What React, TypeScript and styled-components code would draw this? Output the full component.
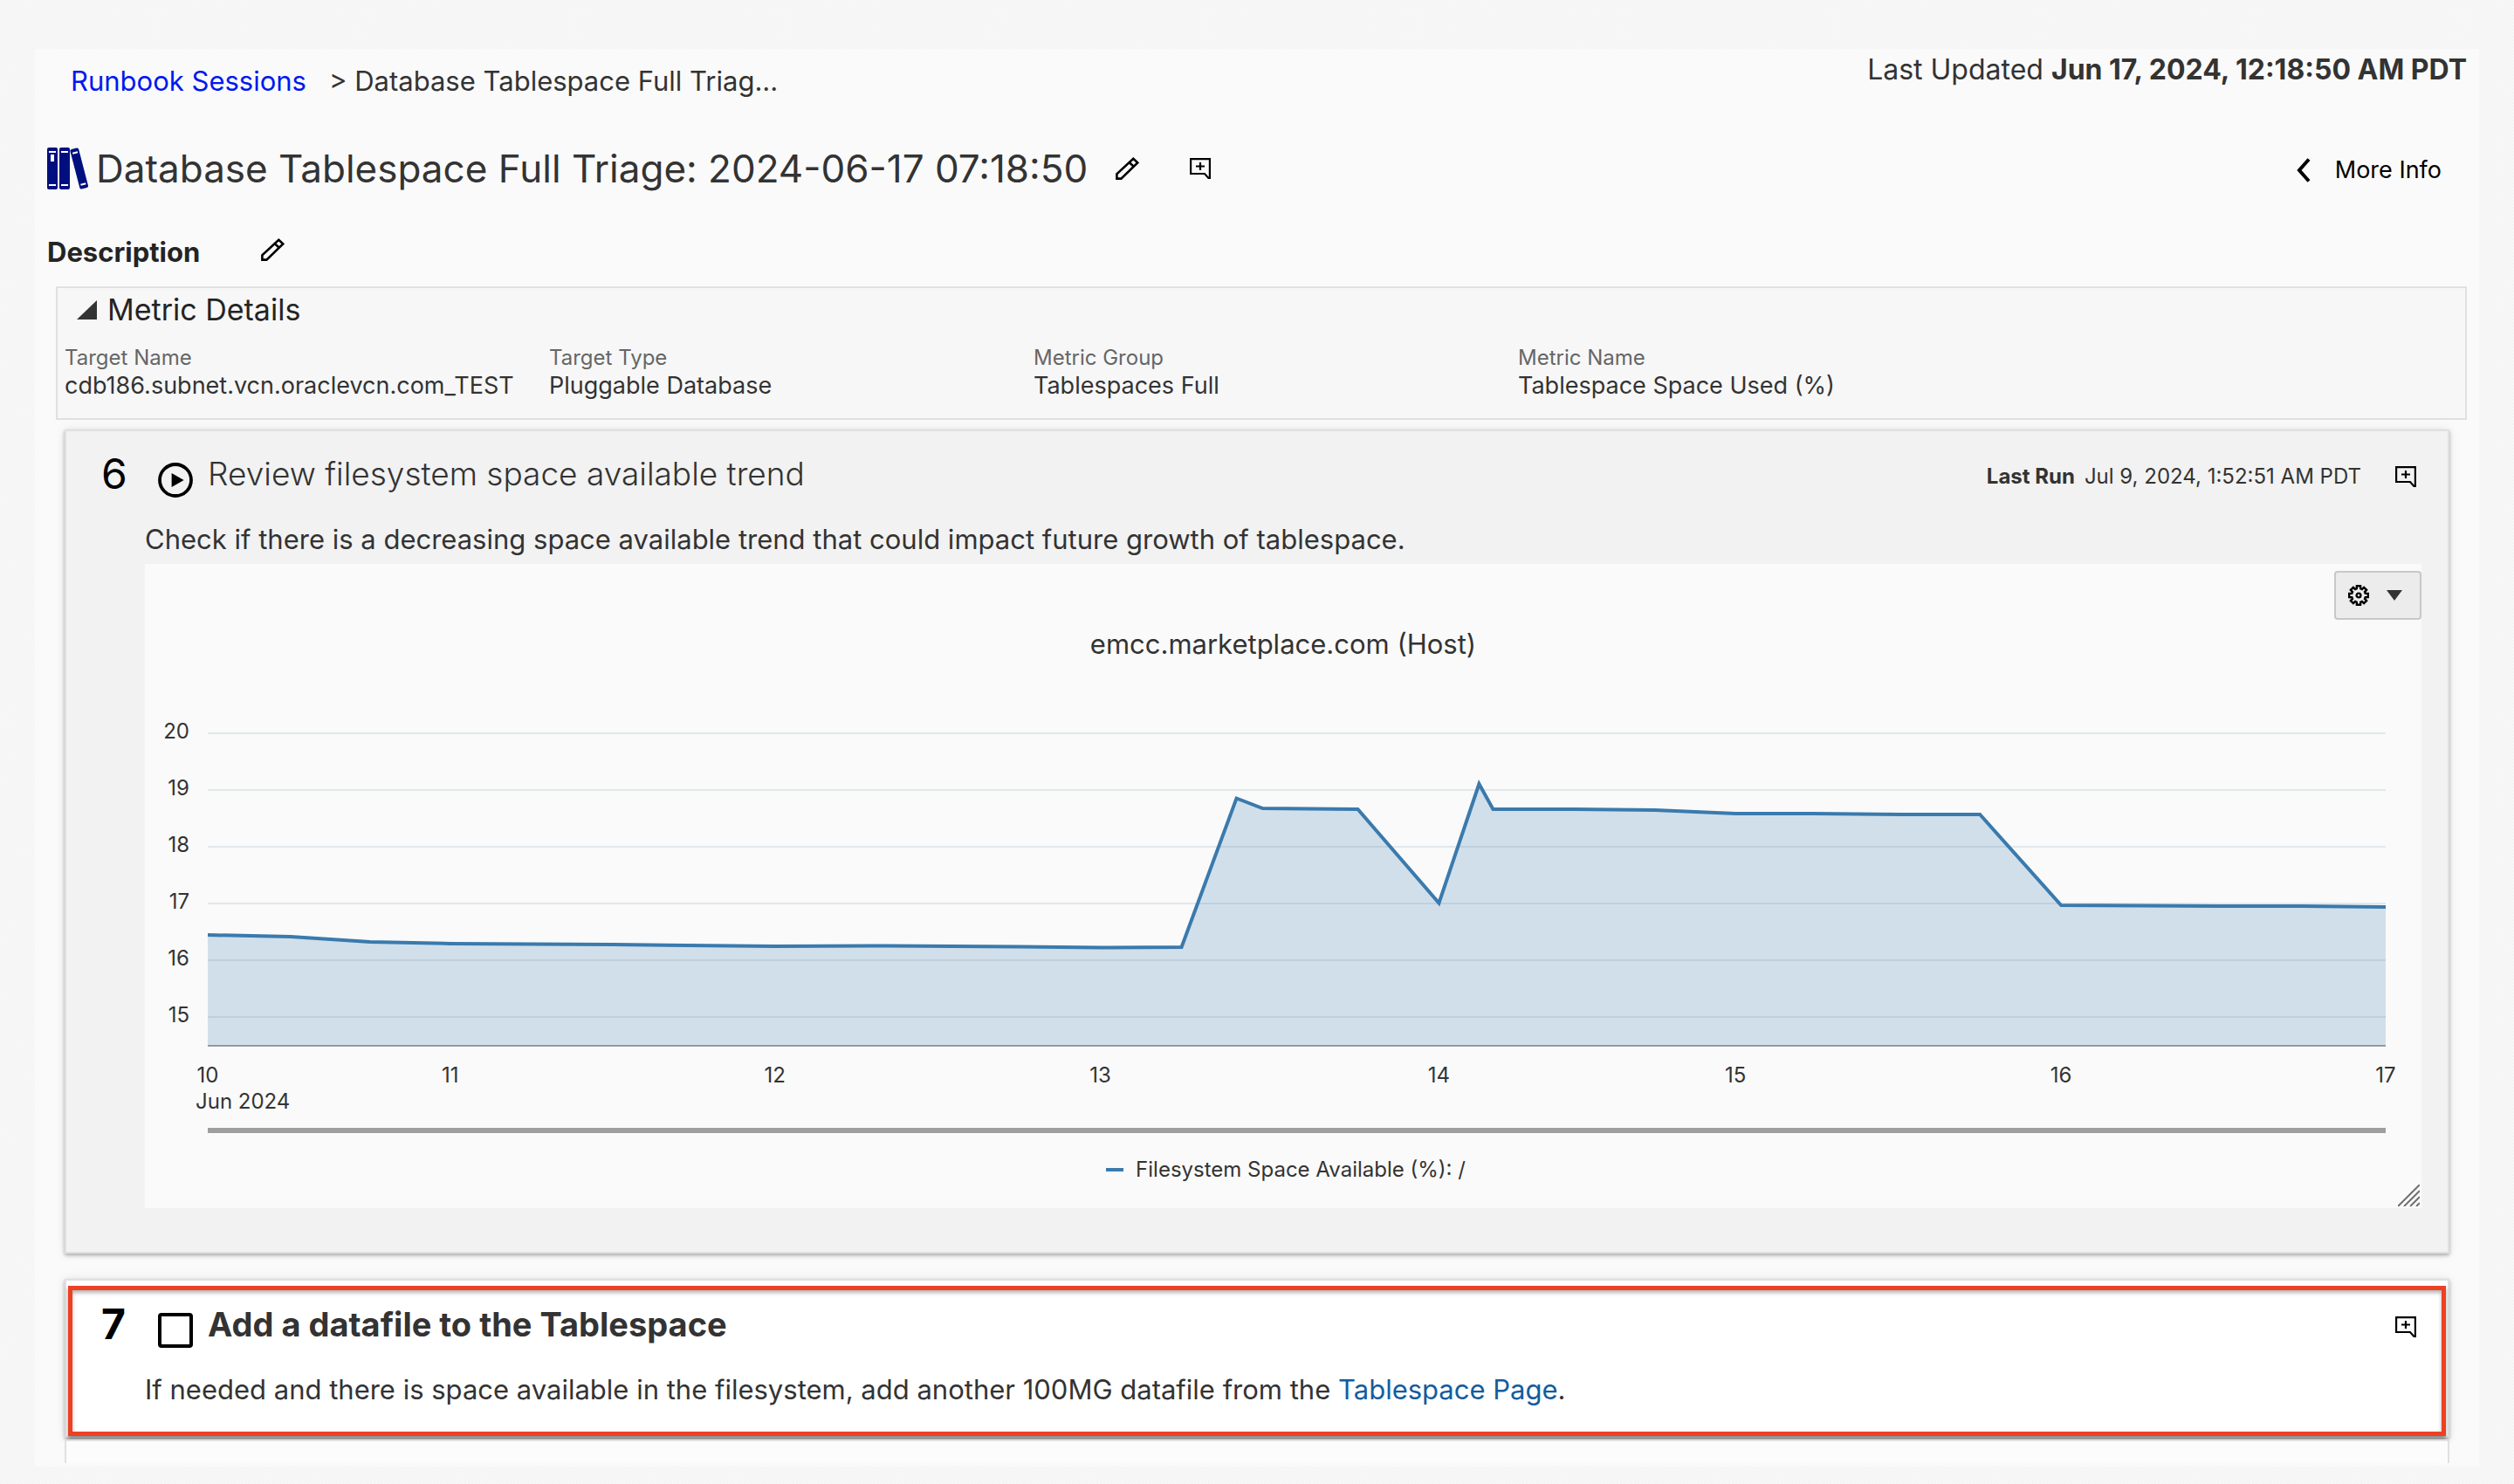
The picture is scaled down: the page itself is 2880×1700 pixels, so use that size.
import React from 'react';
import styled, { createGlobalStyle } from 'styled-components';

const GlobalStyle = createGlobalStyle`
  *, *::before, *::after { box-sizing: border-box; }
  body {
    margin: 0;
    background-color: #f8f8f8;
    background-image: linear-gradient(45deg, #f4f4f4 25%, transparent 25%, transparent 50%, #f4f4f4 50%, #f4f4f4 75%, transparent 75%);
    background-size: 4px 4px;
    color: #333;
    font-family: Inter, "Liberation Sans", sans-serif;
    font-size: 31px;
    line-height: 40px;
  }
  h1, h2, h3, p, dl, dd { margin: 0; font-weight: 400; }
  button { font-family: inherit; color: inherit; }
  svg { display: block; flex: none; }
`;

const Page = styled.main`
  margin: 56px 40px 20px;
  padding: 4px 0;
  background: #fafafa;
`;

const TopBar = styled.header`
  display: flex;
  justify-content: space-between;
  align-items: flex-start;
  padding: 0 14px 0 41px;
`;

const Breadcrumb = styled.nav`
  display: flex;
  gap: 26px;
  padding-top: 13px;
`;

const CrumbLink = styled.a`
  color: #0018f0;
  text-decoration: none;
`;

const Updated = styled.p`
  font-size: 32px;
  strong { font-weight: 700; }
`;

const TitleRow = styled.div`
  display: flex;
  align-items: center;
  height: 60px;
  margin-top: 50px;
  padding: 0 43px 0 14px;
`;

const Title = styled.h1`
  margin: 0 32px 0 8px;
  font-size: 44px;
  line-height: 60px;
`;

const IconButton = styled.button`
  display: flex;
  padding: 0;
  border: 0;
  background: none;
  color: #000;
  cursor: pointer;
`;

const CommentSlot = styled.div`
  margin-left: 58px;
`;

const MoreInfo = styled(IconButton)`
  align-items: center;
  gap: 28px;
  margin-left: auto;
  padding-top: 3px;
  font-size: 27px;
  line-height: 36px;
`;

const DescriptionRow = styled.div`
  display: flex;
  align-items: center;
  gap: 70px;
  margin: 46px 14px 19px;
  ${IconButton} { padding-bottom: 6px; }
`;

const DescriptionTitle = styled.h2`
  color: #242424;
  font-size: 31px;
  font-weight: 700;
`;

const MetricPanel = styled.section`
  margin: 0 14px 0 24px;
  padding: 3px 8px 19px;
  border: 2px solid #e0e0e0;
  background: #f7f7f7;
`;

const Disclosure = styled(IconButton)`
  align-items: center;
  gap: 12px;
  padding-left: 14px;
  color: #242424;
  font-size: 34px;
  line-height: 44px;
`;

const MetricList = styled.dl`
  display: grid;
  grid-template-columns: repeat(4, minmax(0, 555px));
  margin-top: 19px;
`;

const MetricLabel = styled.dt`
  color: #666;
  font-size: 24px;
  line-height: 28px;
`;

const MetricValue = styled.dd`
  font-size: 27px;
  line-height: 36px;
`;

const Card = styled.section<{ $bg: string }>`
  position: relative;
  margin: 0 34px;
  border: 2px solid #e0e0e0;
  background: ${(p) => p.$bg};
  box-shadow: 0 2px 4px rgba(0, 0, 0, 0.3), 0 0 12px rgba(0, 0, 0, 0.08);
`;

const RunCard = styled(Card)`
  margin-top: 11px;
  padding: 19px 30px 50px 40px;
`;

const TaskCard = styled(Card)`
  margin-top: 29px;
  padding: 20px 30px 33px 40px;
`;

const NextCard = styled(Card)`
  height: 27px;
  margin-top: 2px;
  border-bottom: 0;
  box-shadow: none;
`;

const Highlight = styled.div`
  position: absolute;
  inset: 6px 2px 0;
  border: 5px solid #ee4023;
  box-shadow: 0 3px 4px rgba(0, 0, 0, 0.4), inset 0 3px 4px rgba(0, 0, 0, 0.3);
  pointer-events: none;
`;

const StepHeader = styled.div`
  display: flex;
  align-items: center;
  height: 60px;
  padding-right: 6px;
`;

const StepNumber = styled.span<{ $bold?: boolean }>`
  width: 65px;
  color: #000;
  font-size: 48px;
  font-weight: ${(p) => (p.$bold ? 700 : 400)};
  line-height: 60px;
`;

const StepControl = styled.div`
  align-self: flex-end;
  margin-bottom: 3px;
`;

const StepTitle = styled.h2<{ $bold?: boolean }>`
  margin-left: 17px;
  font-size: ${(p) => (p.$bold ? 38 : 37)}px;
  font-weight: ${(p) => (p.$bold ? 700 : 300)};
  line-height: 56px;
`;

const StepActions = styled.div`
  display: flex;
  align-items: center;
  gap: 39px;
  margin-left: auto;
  padding-top: 6px;
`;

const LastRun = styled.p`
  display: flex;
  gap: 11px;
  font-size: 24px;
  line-height: 28px;
  strong { font-weight: 700; }
`;

const StepBody = styled.p`
  margin: 25px 0 0 50px;
`;

const PageLink = styled.a`
  color: #145c9e;
  text-decoration: none;
`;

const CheckBox = styled.input`
  display: block;
  appearance: none;
  width: 40px;
  height: 40px;
  margin: 0;
  border: 4px solid #000;
  border-radius: 4px;
  background: #fff;
`;

const ChartPanel = styled.figure`
  position: relative;
  margin: 8px 0 0 50px;
  padding: 8px 0 28px;
  background: #fafafa;
`;

const ChartTools = styled.div`
  display: flex;
  justify-content: flex-end;
`;

const GearButton = styled.button`
  display: flex;
  align-items: center;
  gap: 20px;
  width: 100px;
  height: 56px;
  padding: 0 14px;
  border: 2px solid #c8c8c8;
  border-radius: 4px;
  background: #ececec;
`;

const ChartTitle = styled.h3`
  margin: 8px 0 62px;
  font-size: 31px;
  text-align: center;
`;

const ChartArea = styled.div`
  padding: 0 41px 0 72px;
`;

const ChartSvg = styled.svg`
  width: 100%;
  height: 484px;
  overflow: visible;
  fill: #333;
  font-size: 24px;
`;

const Legend = styled.figcaption`
  display: flex;
  align-items: center;
  justify-content: center;
  gap: 14px;
  margin-top: 20px;
  padding-left: 6px;
  font-size: 24px;
  line-height: 32px;
`;

const LegendMark = styled.span`
  width: 20px;
  height: 4px;
  background: #3a7aad;
`;

const Resizer = styled.div`
  position: absolute;
  right: 2px;
  bottom: 2px;
`;

const Books = () => (
  <svg width="48" height="48" viewBox="0 0 48 48" aria-hidden="true">
    <g fill="#000f80">
      <rect width="12" height="48" rx="2" />
      <rect x="14" width="12" height="48" rx="2" />
      <rect x="26" y="2.5" width="10" height="47" rx="2" transform="rotate(-14.5 26 2.5)" />
    </g>
    <g fill="#fff">
      <rect x="2" y="4" width="8" height="2" />
      <rect x="4" y="8" width="4" height="8" />
      <rect x="2" y="42" width="8" height="2" />
      <rect x="16" y="4" width="8" height="2" />
      <rect x="16" y="42" width="8" height="2" />
      <g transform="rotate(-14.5 26 2.5)">
        <rect x="28" y="6.5" width="6" height="2" />
        <rect x="28" y="43.5" width="6" height="2" />
      </g>
    </g>
  </svg>
);

const Pencil = () => (
  <svg width="27" height="26" viewBox="0 0 27 26" fill="none" stroke="#000" strokeWidth="2.6" aria-hidden="true">
    <path d="M1.4 24.6V19.4L20.3 1.8L25.2 6.4L6.4 24.6ZM15.6 6L20.8 10.8" />
  </svg>
);

const Comment = () => (
  <svg width="24" height="24" viewBox="0 0 24 24" fill="none" stroke="#000" strokeWidth="2.2" aria-hidden="true">
    <path d="M1.1 1.1H22.9V22.9H21.4L17 18H1.1ZM12 5V14M7 9.5H17" />
  </svg>
);

const CommentButton = () => (
  <IconButton type="button" aria-label="Add note">
    <Comment />
  </IconButton>
);

const Play = () => (
  <svg width="40" height="40" viewBox="0 0 40 40" aria-hidden="true">
    <circle cx="20" cy="20" r="18" fill="none" stroke="#000" strokeWidth="3.8" />
    <path d="M15.6 12L29.6 20L15.6 28Z" />
  </svg>
);

const gearPoints = Array.from({ length: 8 }, (_, i) =>
  [[-16, 8], [-11, 11], [11, 11], [16, 8]].map(([offset, radius]) => {
    const angle = ((i * 45 + offset) * Math.PI) / 180;
    return `${(12 + radius * Math.sin(angle)).toFixed(2)},${(12 - radius * Math.cos(angle)).toFixed(2)}`;
  }).join(' '),
).join(' ');

const Gear = () => (
  <svg width="24" height="24" viewBox="0 0 24 24" fill="none" stroke="#000" strokeWidth="2.4" aria-hidden="true">
    <polygon points={gearPoints} />
    <circle cx="12" cy="12" r="2.4" />
  </svg>
);

const metrics = [
  ['Target Name', 'cdb186.subnet.vcn.oraclevcn.com_TEST'],
  ['Target Type', 'Pluggable Database'],
  ['Metric Group', 'Tablespaces Full'],
  ['Metric Name', 'Tablespace Space Used (%)'],
];

const PLOT_WIDTH = 2496;
const AXIS_Y = 378;
const yTicks = [20, 19, 18, 17, 16, 15];
const xTicks: [number, number][] = [
  [10, 0], [11, 278], [12, 650], [13, 1023], [14, 1411], [15, 1751], [16, 2124], [17, 2496],
];
const series = [
  [0, 251], [95, 253], [186, 259], [278, 261], [464, 262], [650, 264], [760, 263.5], [930, 264.5],
  [1023, 265.5], [1116, 265], [1179, 94.5], [1209, 106], [1318, 107], [1411, 214.5], [1457, 78],
  [1473, 107], [1566, 107], [1659, 108], [1751, 112], [1840, 112], [1940, 113], [2031, 113],
  [2124, 217], [2310, 218], [2400, 218], [2496, 219],
];
const line = series.map(([x, y]) => `${x},${y}`).join(' ');

const Chart = () => (
  <ChartSvg role="img" aria-label="Filesystem space available">
    {yTicks.map((tick, i) => (
      <g key={tick}>
        <line x1="0" x2="100%" y1={20 + i * 65} y2={20 + i * 65} stroke="#e2e7eb" strokeWidth="2" />
        <text x="-21" y={26 + i * 65} textAnchor="end">{tick}</text>
      </g>
    ))}
    <line x1="0" x2="100%" y1={AXIS_Y} y2={AXIS_Y} stroke="#9e9e9e" strokeWidth="2" />
    <svg width="100%" height="484" viewBox={`0 0 ${PLOT_WIDTH} 484`} preserveAspectRatio="none">
      <polygon points={`0,${AXIS_Y} ${line} ${PLOT_WIDTH},${AXIS_Y}`} fill="#3a7aad" fillOpacity="0.21" />
      <polyline points={line} fill="none" stroke="#3a7aad" strokeWidth="4" strokeMiterlimit="10" vectorEffect="non-scaling-stroke" />
    </svg>
    {xTicks.map(([tick, x]) => (
      <text key={tick} x={`${(x / PLOT_WIDTH) * 100}%`} y="420" textAnchor="middle">{tick}</text>
    ))}
    <text x="-14" y="450">Jun 2024</text>
    <rect y="472" width="100%" height="6" fill="#9e9e9e" />
  </ChartSvg>
);

export default function App() {
  return (
    <>
      <GlobalStyle />
      <Page>
        <TopBar>
          <Breadcrumb aria-label="Breadcrumb">
            <CrumbLink href="#sessions">Runbook Sessions</CrumbLink>
            <span>&gt; Database Tablespace Full Triag...</span>
          </Breadcrumb>
          <Updated>Last Updated <strong>Jun 17, 2024, 12:18:50 AM PDT</strong></Updated>
        </TopBar>

        <TitleRow>
          <Books />
          <Title>Database Tablespace Full Triage: 2024-06-17 07:18:50</Title>
          <IconButton type="button" aria-label="Edit title"><Pencil /></IconButton>
          <CommentSlot><CommentButton /></CommentSlot>
          <MoreInfo type="button">
            <svg width="16" height="28" viewBox="0 0 16 28" fill="none" stroke="#000" strokeWidth="4" aria-hidden="true">
              <path d="M14 1.5L3 14L14 26.5" />
            </svg>
            More Info
          </MoreInfo>
        </TitleRow>

        <DescriptionRow>
          <DescriptionTitle>Description</DescriptionTitle>
          <IconButton type="button" aria-label="Edit description"><Pencil /></IconButton>
        </DescriptionRow>

        <MetricPanel>
          <h2>
            <Disclosure type="button" aria-expanded="true">
              <svg width="23" height="22" viewBox="0 0 23 22" fill="#333" aria-hidden="true"><path d="M0 22L23 0V22Z" /></svg>
              Metric Details
            </Disclosure>
          </h2>
          <MetricList>
            {metrics.map(([label, value]) => (
              <div key={label}>
                <MetricLabel>{label}</MetricLabel>
                <MetricValue>{value}</MetricValue>
              </div>
            ))}
          </MetricList>
        </MetricPanel>

        <RunCard $bg="#f2f2f2">
          <StepHeader>
            <StepNumber>6</StepNumber>
            <StepControl>
              <IconButton type="button" aria-label="Run step"><Play /></IconButton>
            </StepControl>
            <StepTitle>Review filesystem space available trend</StepTitle>
            <StepActions>
              <LastRun><strong>Last Run</strong> <span>Jul 9, 2024, 1:52:51 AM PDT</span></LastRun>
              <CommentButton />
            </StepActions>
          </StepHeader>
          <StepBody>
            Check if there is a decreasing space available trend that could impact future growth of tablespace.
          </StepBody>
          <ChartPanel>
            <ChartTools>
              <GearButton type="button" aria-label="Chart settings">
                <Gear />
                <svg width="18" height="12" viewBox="0 0 18 12" fill="#333" aria-hidden="true"><path d="M0 0H18L9 12Z" /></svg>
              </GearButton>
            </ChartTools>
            <ChartTitle>emcc.marketplace.com (Host)</ChartTitle>
            <ChartArea><Chart /></ChartArea>
            <Legend><LegendMark />Filesystem Space Available (%): /</Legend>
            <Resizer>
              <svg width="25" height="25" viewBox="0 0 25 25" stroke="#707070" strokeWidth="2" aria-hidden="true">
                <path d="M0 25L25 0M7 25L25 7M14 25L25 14M21 25L25 21" />
              </svg>
            </Resizer>
          </ChartPanel>
        </RunCard>

        <TaskCard $bg="#fff">
          <StepHeader>
            <StepNumber $bold>7</StepNumber>
            <StepControl><CheckBox type="checkbox" id="step-7" /></StepControl>
            <StepTitle $bold><label htmlFor="step-7">Add a datafile to the Tablespace</label></StepTitle>
            <StepActions><CommentButton /></StepActions>
          </StepHeader>
          <StepBody>
            If needed and there is space available in the filesystem, add another 100MG datafile from the{' '}
            <PageLink href="#tablespace">Tablespace Page</PageLink>.
          </StepBody>
          <Highlight />
        </TaskCard>
        <NextCard $bg="#fcfcfc" />
      </Page>
    </>
  );
}
